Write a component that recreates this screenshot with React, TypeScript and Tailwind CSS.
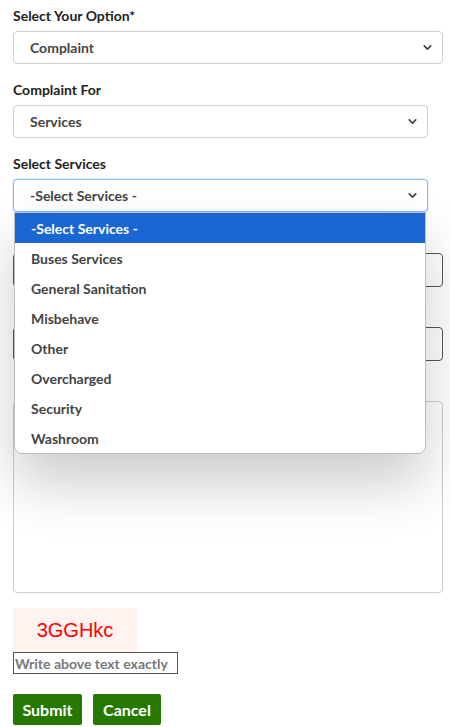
import { ChevronDown } from 'lucide-react'

const SERVICES = [
  'Buses Services',
  'General Sanitation',
  'Misbehave',
  'Other',
  'Overcharged',
  'Security',
  'Washroom',
]

function Select({ value, wide, focused }: { value: string; wide?: boolean; focused?: boolean }) {
  return (
    <div
      className={`flex h-[33px] items-center justify-between rounded-[4px] border bg-white pl-4 pr-2 text-[14px] font-bold text-[#444] ${
        wide ? 'w-[430px]' : 'w-[415px]'
      } ${focused ? 'border-[#86b7fe] shadow-[0_0_2px_rgba(13,110,253,0.35)]' : 'border-[#cfcfcf]'}`}
    >
      <span>{value}</span>
      <ChevronDown size={13} strokeWidth={3} className="text-[#444]" />
    </div>
  )
}

export default function App() {
  return (
    <div className="min-h-screen bg-white px-[13px] pt-[7px] font-['Lato','Noto_Sans',sans-serif] text-[#222]">
      <label className="block text-[14px] font-bold leading-[18px]">Select Your Option*</label>
      <div className="mt-[6px]">
        <Select value="Complaint" wide />
      </div>

      <label className="mt-[17px] block text-[14px] font-bold leading-[18px]">Complaint For</label>
      <div className="mt-[6px]">
        <Select value="Services" />
      </div>

      <label className="mt-[17px] block text-[14px] font-bold leading-[18px]">Select Services</label>
      <div className="relative mt-[6px]">
        <Select value="-Select Services -" focused />

        <ul className="absolute left-[1px] top-[33px] z-10 w-[412px] overflow-hidden rounded-b-[8px] border border-[#bdbdbd] bg-white text-[14px] font-bold text-[#444] shadow-[0_30px_56px_rgba(0,0,0,0.2)]">
          <li className="flex h-[30px] items-center bg-[#1a66d2] pl-4 text-white">-Select Services -</li>
          {SERVICES.map(s => (
            <li key={s} className="flex h-[30px] items-center pl-4">
              {s}
            </li>
          ))}
        </ul>

        {/* fields hidden under the open list */}
        <input aria-label="Complaint Title" className="mt-[41px] block h-[34px] w-[430px] rounded-[4px] border border-[#555]" />
        <input aria-label="Mobile No" className="mt-[40px] block h-[34px] w-[430px] rounded-[4px] border border-[#555]" />
        <textarea aria-label="Description" className="mt-[40px] block h-[192px] w-[430px] resize-none rounded-[4px] border border-[#cfcfcf]" />
      </div>

      <div className="mt-[15px] flex h-[44px] w-[124px] items-center justify-center bg-[#fff3ef] font-['Liberation_Sans',sans-serif] text-[20px] text-[#ff0000]">
        3GGHkc
      </div>
      <input
        placeholder="Write above text exactly"
        className="block h-[22px] w-[165px] border border-[#555] px-[1px] text-[14px] font-bold text-[#444] placeholder:text-[#777]"
      />

      <div className="mt-[20px] flex gap-[11px]">
        <button className="h-[31px] w-[69px] rounded-[2px] bg-[#267800] text-[16px] font-bold text-white">Submit</button>
        <button className="h-[31px] w-[68px] rounded-[2px] bg-[#267800] text-[16px] font-bold text-white">Cancel</button>
      </div>
    </div>
  )
}
